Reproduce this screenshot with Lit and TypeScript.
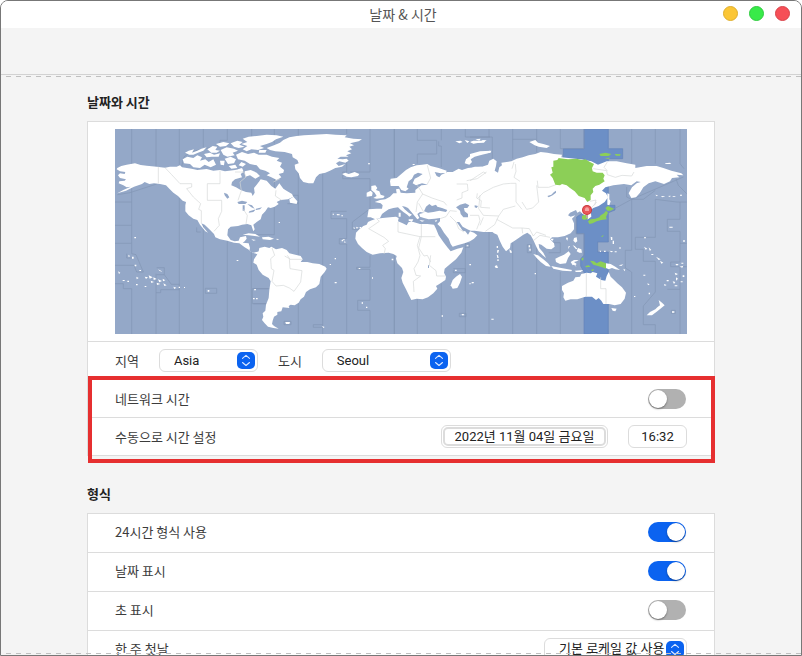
import { LitElement, html, svg, css } from "lit";
import { customElement } from "lit/decorators.js";

// The map is drawn on a 1716 x 615 grid. Each sheet is a part of it with its own origin.
const americas = [
  // North America
  "M22 138L34 132 50 128 75 124 92 129 110 131 140 134 165 137 180 134 200 134 210 130 216 136 245 140 262 144 290 141 310 146 330 144 345 148 375 144 392 140 400 150 392 156 396 166 375 172 366 180 364 190 378 196 392 204 408 210 424 212 428 222 434 212 432 198 440 188 448 178 452 172 470 176 484 192 496 200 508 184 520 200 532 208 546 216 550 224 534 232 512 234 500 240 482 246 476 250 486 242 500 240 506 246 494 254 482 258 474 256 466 268 456 278 452 292 440 300 430 308 434 322 430 328 424 310 412 306 396 308 384 312 362 314 354 322 352 340 362 354 374 358 386 356 390 346 408 342 410 350 404 358 398 362 416 364 420 378 418 386 430 392 450 388 456 394 440 396 428 392 414 382 404 376 388 364 372 362 352 356 330 352 316 346 312 336 298 322 284 308 274 304 280 316 294 332 286 328 270 308 262 294 250 290 236 280 226 268 226 250 228 240 218 236 204 222 190 212 178 200 168 190 150 186 132 184 118 186 104 180 96 186 72 194 48 206 22 214 40 204 62 194 50 196 40 190 26 184 28 178 44 176 48 172 30 168 24 160 30 154 44 156 46 150 30 148 20 142Z",
  // Arctic islands
  "M222 124L218 112 232 104 250 108 262 100 276 106 270 116 286 112 296 120 310 112 318 128 302 136 284 128 270 138 250 136 240 126Z",
  "M225 92L236 86 252 82 246 92 262 86 274 80 290 76 280 86 264 92 250 98 238 98Z",
  "M292 82L308 72 322 74 316 84 330 86 320 92 304 92ZM318 66L340 60 358 64 348 72 330 74ZM282 96L300 92 312 98 330 94 326 104 306 104 290 106Z",
  "M332 84L350 76 372 80 384 86 368 92 374 100 352 104 340 98ZM344 110L362 104 378 112 372 124 354 126ZM330 116L344 116 342 130 332 128ZM356 132L376 128 382 138 364 140Z",
  "M362 64L382 56 398 60 388 68 404 74 386 78 372 74ZM378 98L396 90 414 96 432 92 446 98 470 98 486 104 508 108 500 116 516 122 510 134 522 144 520 152 506 156 514 166 500 174 484 166 470 160 480 154 466 146 450 142 440 130 420 126 404 116 384 112Z",
  "M398 50L416 44 440 42 470 38 500 40 520 44 498 52 486 60 470 66 450 72 462 78 444 84 424 82 410 88 398 82 412 72 394 66 412 60ZM394 120L408 126 398 134 386 130ZM404 148L422 144 440 152 450 162 436 170 420 160 406 164ZM448 84L470 84 466 92 446 92ZM384 142L396 138 400 146 390 150Z",
  // Newfoundland and the Caribbean
  "M538 232L550 224 562 238 560 246 540 242ZM398 338L416 334 436 336 450 344 434 342 416 340ZM456 346L476 344 492 350 480 354 458 352ZM424 352L438 354 430 356ZM500 350L508 352 500 354Z",
  // Hawaii, Polynesia, scattered islands
  "M73 345h5v4h-5ZM55 398l5 4-4 4ZM66 404h5v6h-5ZM74 428h5v5h-5ZM24 448l7 4-4 4ZM38 474h6v3h-6ZM52 476h5v4h-5ZM79 464l7 4-6 4ZM88 444h5v3h-5ZM104 464l10 2-6 5ZM116 460l12 6-9 4ZM130 466l10 5-9 3ZM144 472l12 5-8 4ZM122 476l10 4-8 3ZM140 482l11 4-10 3ZM158 470l8 5-7 3ZM160 484l10 6-7 2ZM78 486h5v4h-5ZM104 492h5v3h-5ZM144 442l9 4 5 4-9-3ZM190 494l9 3-6 4ZM206 494h4v4h-4ZM222 495h3v3h-3ZM293 504h5v5h-5ZM380 414h5v3h-5ZM432 502l6-1v4h-6ZM429 528h5v4h-5ZM438 528h5v4h-5ZM506 300h4v3h-4Z",
];

const atlantic = [
  "M50 78L72 70 90 62 100 54 118 46 140 42 162 40 190 38 230 36 256 38 290 40 284 46 310 50 336 52 326 58 300 64 312 70 298 74 306 82 292 88 304 94 288 100 296 104 272 104 262 110 278 112 290 110 296 116 286 122 268 118 258 124 266 132 286 126 276 134 256 138 240 146 226 152 208 156 198 166 190 184 176 184 160 180 150 168 146 154 136 142 134 128 146 124 142 114 128 106 126 96 104 90 76 88 60 84Z",
  "M276 156L286 152 296 156 314 150 328 156 324 162 304 166 290 164Z",
  "M28 378L44 374 58 378 64 374 78 382 96 378 110 384 118 394 136 398 152 402 158 412 152 420 172 420 188 424 208 426 226 434 230 440 224 450 212 464 208 486 198 496 180 502 168 510 162 524 152 532 146 542 134 550 122 548 116 552 118 558 98 556 94 568 82 570 82 578 72 584 68 596 66 606 72 612 86 620 70 618 54 614 44 604 36 594 40 584 38 574 46 566 48 548 56 528 58 504 62 478 56 468 38 458 26 444 20 428 10 422 12 412 20 400 26 388Z",
  "M106 600l14 0-2 6h-10ZM216 612l8 3-4 3ZM254 408h4v4h-4ZM239 426h4v3h-4ZM254 480h6v4h-6ZM326 438h5v3h-5ZM366 466h3v4h-3ZM335 541h4v4h-4ZM348 554h4v4h-4ZM425 410h5v5h-5ZM248 275h4v3h-4ZM260 276l9 1 0 3h-8ZM274 280h5v3h-5ZM275 354h4v4h-4ZM282 358l6 2-4 3ZM278 352h6v3h-6ZM310 316l6 2-4 3ZM318 314l8 3-6 3ZM329 315h4v4h-4Z",
];

const africaEurope = [
  // Europe, the Near East and western Russia
  "M150 178L152 170 170 168 184 156 198 144 212 136 230 130 246 128 262 126 272 132 296 138 320 146 318 152 302 154 284 150 290 162 298 166 304 158 322 150 338 150 356 140 366 144 384 138 404 136 424 134 460 140 460 330 430 330 404 326 392 326 382 322 368 314 358 300 350 300 360 314 368 326 376 328 384 338 390 328 402 332 412 340 402 350 390 358 374 364 352 370 338 374 332 366 326 350 312 332 302 316 292 306 300 298 300 288 284 290 266 292 252 288 240 284 238 276 252 272 240 270 232 276 238 288 232 292 224 282 216 272 204 258 196 254 186 252 194 262 206 272 216 278 208 284 202 278 190 270 180 262 174 256 160 258 146 262 134 270 126 276 120 288 106 292 92 286 82 286 86 262 110 260 126 260 128 250 122 244 104 240 120 234 136 232 150 224 160 214 170 214 168 202 178 200 182 212 200 214 226 212 226 204 244 190 264 188 246 184 228 190 218 184 224 170 236 164 248 156 234 152 222 158 216 170 206 178 200 196 206 200 196 208 184 204 176 192 164 192 152 192Z",
  // Africa
  "M84 300L92 296 108 290 128 288 150 286 168 284 176 288 174 298 188 304 200 310 206 300 220 300 240 306 262 306 282 308 288 320 296 340 310 360 322 376 332 388 352 380 370 376 364 392 348 412 328 428 314 440 312 452 318 464 316 474 298 486 288 492 292 500 280 514 264 526 248 532 230 530 214 534 206 518 198 502 188 482 184 468 190 450 186 438 172 424 168 410 170 402 160 396 146 392 120 394 98 398 80 390 66 378 54 366 46 350 48 332 58 322 70 312 80 308Z",
  "M360 456L366 464 360 482 352 498 338 500 332 490 338 474 348 464Z",
  // British Isles
  "M94 192L106 190 112 198 108 204 118 208 122 218 134 222 130 228 110 230 100 228 110 222 104 212 94 204ZM80 212L92 206 98 212 96 222 80 224Z",
  // Novaya Zemlya and Svalbard
  "M374 124L378 112 388 104 400 98 416 92 450 86 450 92 420 100 404 104 392 112 396 120 388 128Z",
  "M346 58l16-2 6 4-10 4ZM374 54l14 4-6 5ZM392 60l20-2 4 4-16 3ZM406 52l16-2-4 6ZM424 54l16 1-8 5ZM218 126h6v3h-6ZM84 124h6v3h-6Z",
  "M206 292l14 0-4 8-10-4ZM176 272l6 0 0 12-6 0ZM238 294l16 2-8 3ZM284 296l8-2-4 6ZM380 370h5v3h-5ZM388 426h5v4h-5ZM345 443h5v4h-5ZM388 484h4v3h-4ZM396 480h5v4h-5ZM305 580h4v4h-4ZM364 576l9 1-4 4Z",
];

const asia = [
  "M0 140L14 134 36 134 54 128 58 116 70 110 80 118 78 132 74 146 84 152 88 136 96 130 94 122 110 120 124 118 140 110 158 106 176 100 196 96 212 90 232 92 252 96 276 98 274 106 330 112 364 118 384 128 410 118 440 118 470 124 496 128 496 138 530 132 560 132 580 138 604 146 634 154 640 160 620 158 628 166 606 168 600 178 582 186 556 178 536 184 520 196 510 212 498 226 484 228 476 214 486 196 500 184 512 180 500 178 484 190 462 186 430 190 406 196 396 206 408 214 414 226 404 240 386 252 370 258 362 264 364 284 354 292 346 290 346 280 338 276 330 268 322 272 318 264 300 272 294 280 302 284 316 280 306 290 312 304 312 322 302 334 284 342 264 346 246 346 240 352 252 364 254 374 244 382 230 380 214 368 206 366 208 378 220 392 228 408 218 400 206 388 198 372 190 354 182 340 172 332 160 338 146 348 134 356 122 364 120 378 108 388 98 374 90 358 82 338 72 334 60 324 40 328 20 322 0 320Z",
  // Severnaya Zemlya and New Siberian fringe
  "M178 60L196 54 204 62 220 66 240 72 230 78 206 74 194 70ZM0 60l10-4 36 0-4 6-34 2ZM0 96L30 88 64 86 62 92 30 96 0 106Z",
  // South-east Asia
  "M190 396L204 400 220 412 234 424 242 434 228 432 212 420 200 408ZM256 410L268 404 282 398 296 388 302 396 294 408 288 424 270 426 258 420ZM244 432L262 436 286 440 306 444 304 448 278 446 250 440ZM302 420l10-6 14 0-6 4-8 2 8 6-4 4 4 6-8-8-4 2ZM312 348l8-2 2 12-6 4-6-6ZM308 370l6 2 8 8-4 2ZM324 378l10 4 2 10-8 0-8-4ZM300 372l-6 10 2-10ZM314 446l26-2-8 6-14 0ZM118 382l6 4 2 6-6 0ZM290 346l4 2-2 8-4-6ZM243 350l8 0-3 6-5-2Z",
  "M80 372l4 0 0 6-4 0ZM82 384l5 0-2 8-4 0ZM80 398l4 2 2 8-4 0ZM82 412h4v5h-4ZM74 432l7-2 3 8-7 0ZM176 370h4v6h-4ZM178 380h4v6h-4ZM194 453h4v4h-4ZM64 590h7v3h-7ZM0 484l10-4v3Z",
];

const pacific = [
  // Australia, Tasmania, New Guinea, New Zealand
  "M6 492L24 482 40 476 46 466 60 464 64 456 80 452 92 454 98 450 112 454 108 464 124 474 136 476 140 462 146 450 152 464 160 472 172 484 186 496 198 512 194 530 182 546 164 550 148 546 130 546 124 536 116 528 108 534 96 524 76 524 52 532 32 532 16 536 10 526 12 514 6 504ZM154 558L170 560 166 568 158 566Z",
  "M138 424L152 426 166 434 180 444 166 442 156 438 146 442 138 438ZM296 534L306 542 314 550 304 558 292 568 276 580 260 580 270 570 286 562 292 556 300 550Z",
  // Sakhalin and Kuril islands
  "M142 214L148 216 148 232 152 238 148 250 142 248ZM314 124l16-2 4 4-16 0ZM286 218l8 2-4 3ZM302 222l14 1-8 3ZM324 222l8-1-2 4ZM338 222h8v2h-8ZM360 218h6v3h-6Z",
  // Micronesia and Melanesia
  "M152 344l5 2 0 8-4 0ZM158 356h4v10h-4ZM118 386l5 0 0 5-4-3ZM132 386h5v4h-5ZM148 386l12 2-6 3ZM164 388h6v3h-6ZM178 376h4v4h-4ZM176 430l14-3-6 5ZM190 440l6 3-3 5ZM252 374l10 6-5 3ZM266 376l8 8-5 2ZM252 346h6v3h-6ZM274 396h6v3h-6ZM288 404l14 8-6 2ZM300 416l10 6-6 3ZM328 314h10v3h-10ZM346 426l10 0-5 5ZM358 434l12-3-3 6ZM364 422h6v3h-6ZM344 452l10 4-7 4ZM348 466l6 4-6 6ZM338 478l8 2-4 6ZM320 474h6v4h-6ZM312 486l8 3-6 3ZM344 490h8v3h-8ZM362 478h6v3h-6ZM368 460h5v5h-5ZM262 484l7 3-5 3ZM250 458h6v3h-6ZM266 512h4v5h-4ZM336 568h7v4h-7ZM222 522h4v3h-4ZM370 354h4v6h-4Z",
];

const seas = [
  // Great Lakes, Great Slave Lake and Winnipeg (sheet of the Americas)
  { x: -15, d: "M342 212l10 4 6 10-6 4-8-10ZM382 240l14-4 16 4-6 6-20 0ZM398 250l6 0 0 16-6 0ZM412 246l14 4 8 10-10-4ZM418 268l20-6-8 8-14 2ZM438 260l18-4-6 6-12 2Z" },
  // Black Sea, Caspian
  { x: 675, d: "M252 268L258 254 268 246 276 252 288 248 292 254 306 258 322 264 318 270 298 266 280 270 264 272ZM348 256L360 248 376 244 388 250 382 258 372 258 374 268 384 276 384 286 370 286 362 276 360 266ZM264 430h3v8h-3Z" },
  // Lake Baikal and Aral
  { x: 1065, d: "M232 222L244 218 252 210 258 206 258 212 248 220 236 226ZM14 250l10 2-4 6-6-2Z" },
];

const japanZone = [
  "M0 109L24 112 50 110 66 114 76 112 90 120 102 126 96 138 98 148 110 152 128 152 134 160 130 170 134 178 118 188 106 192 98 200 100 210 92 220 92 234 82 240 74 228 56 222 44 208 30 198 20 190 6 186 0 190 -14 188 -22 168 -30 158 -22 152 -26 136 -20 134 -20 116 -8 114 -4 108Z",
  "M84 298L92 292 106 290 118 286 122 280 132 274 138 266 144 272 138 284 140 292 124 294 110 298 98 304 88 306ZM136 258L144 252 152 256 162 260 152 266 142 266ZM66 282L80 276 84 290 72 294 66 290ZM90 416L102 418 110 424 122 418 138 424 138 440 126 436 114 432 100 428ZM118 96l18-4 18 4-8 6-24 0ZM134 108l16-1-4 4ZM164 96l18 1-2 4-12 0ZM64 410l6-4 0 8-4 2ZM76 432l10-2 6 4-14 2ZM92 444l10-3-3 7ZM124 342l8-2-6 6Z",
];

const zoneLines = [
  { x: -15, d: "M65 21V240M65 310V364M65 500V636M138 21V185M138 455V636M208 21V130M208 225V636M280 21V75M280 310V636M352 21V55M352 356V636M424 390V636M15 240H65V310H15M15 364H65V395L78 398 100 450H80L72 430H15M50 395V408H65M15 485H40V500H65M140 437H163V458H140M163 458L184 487H208V503H152V512H138M286 499H320V514H286ZM260 316V330H272M427 500H485M427 500V545H485M215 133L222 105 240 90 330 70V55H352M22 218L60 212 140 186" },
  { x: 405, d: "M5 21V60M73 21V64M73 165V338M0 338H73M145 21V42M145 110V636M218 150V636M290 21V36M290 115V150H278V170H360M290 268H243V290H290V350H268V366H290V636M360 21V150H300M360 170V260L307 300V322H330M360 400V436H320V442H360V535H323V565H360V636M433 21V170M433 420V636M102 598H123V608H102ZM218 608H190V616H218M10 500H55M10 545H48M118 220H145V245H112" },
  { x: 675, d: "M163 21V165M163 400V636M232 21V55H290V96H232V125M232 528V636M304 21V55M296 58V72H304V135M304 484V636M376 21V45H450M376 345V636M340 445V452H376V440H340M358 574H378V584H358ZM375 365H388V376H375" },
  { x: 1065, d: "M67 45H0M67 45V110M57 21V45M57 330V636M128 21V110M128 362V636M128 52H200V21M200 52V92M172 368V392H184V368ZM200 378V636M271 21V80H342M215 362H271V392H236M271 450V636M342 21V80M318 290V335H342V430L360 450" },
  { x: 1335, d: "M215 21V125M215 232V385H196V438L215 450V636M286 21V125M286 232V346H226V382H250V418H286V510L250 552V608H286V636M360 21V125L372 140M360 240V292H322V328H360V420H332V434H360V502H322M360 364H380M360 434H380M360 502V636M145 270L215 232 370 165M200 195V225L215 232H250L286 205M286 232L350 240H380M348 170L355 190 380 215M334 565H346V574H334Z" },
];

const borderLines = [
  { x: -15, d: "M145 134V184M165 137L185 158 210 185H245V195L230 200 250 225 272 245 266 262 274 266V304M330 146V185H292V235H335V268L325 290 328 310 312 328M375 150H402L408 165 390 180 394 206 384 235M400 262L412 280 408 306M498 205L496 222 514 234M490 180L510 170" },
  { x: 405, d: "M66 378L74 400 62 410 64 440 72 445 66 478 78 492 100 490 118 498 132 508 152 480 156 446 120 440 118 410 104 402M112 400L120 412H156" },
  { x: 675, d: "M110 290L118 298 86 320 132 346 146 358 128 370 136 380 132 396M174 300V330L240 344H286M244 306V344L236 378 252 402 262 400 272 420M240 344L232 370 240 400 234 420 222 440 228 460 242 462 220 478 222 510M272 400L268 430 288 446 290 462H316M262 130L272 168 262 186M232 190L248 216 232 240 228 270M248 216L276 228 312 240 320 250M252 272L236 244M350 186H382L384 205 366 212 366 228 350 234M412 214L410 228 424 236 422 256 450 258M300 290L318 284 330 266 350 268M330 282L348 300 356 320 372 330M380 176L412 170 440 150" },
  { x: 1065, d: "M0 176L40 150 48 154M22 230L40 212 70 196 100 186 122 184 138 184V240L156 262M30 220L26 260 40 280 86 282 100 262 136 252M0 280L26 280 30 296 20 322M40 286L30 310M136 126L138 148 132 166 150 178M132 120L126 140M200 190L206 240 188 258 170 262 156 240M258 188L236 196 204 196 202 176M86 282L74 308 46 328M80 292L128 318 156 318 158 334M156 318L178 320 190 342 200 330 228 340M360 262L380 240M190 356L210 340 240 346" },
  { x: 1335, d: "M79 453V524M122 466V500H138V546M100 140L140 146 142 158 166 166 186 160 215 162 222 150M142 120L132 136 142 146M90 238L108 234 104 250" },
];

const sheet = (x: number, shapes: string[]) =>
  svg`<g transform="translate(${x} -21)">${shapes.map((d) => svg`<path d=${d}></path>`)}</g>`;
const parts = (list: { x: number; d: string }[]) => list.map((p) => sheet(p.x, [p.d]));

@customElement("zone-map")
export class ZoneMap extends LitElement {
  static styles = css`
    :host { display: block; }
    .map { display: block; width: 100%; height: auto; }
    .ocean { fill: #94a8c8; }
    .band { fill: #6c8fc6; stroke: #6384b8; stroke-width: 2; }
    .land { fill: #fff; }
    .green { fill: #8ccf57; }
    .zones { fill: none; stroke: #8295b4; stroke-width: 2; }
    .borders { fill: none; stroke: #d5d8d8; stroke-width: 2; }
  `;

  render() {
    return html`
      <svg class="map" viewBox="0 0 1716 615" role="img" aria-label="시간대 지도">
        <rect class="ocean" width="1716" height="615"></rect>
        <path class="band" transform="translate(1335 -21)" d="M72 21H145V80H188V110H145V250H165V264L145 272V360H113V390H145V636H72V450L62 432V410L72 400V335H50V285L72 270V110H10V80H72Z"></path>
        <g class="zones">${parts(zoneLines)}</g>
        <g class="land">
          ${sheet(-15, americas)}${sheet(405, atlantic)}${sheet(675, africaEurope)}
          ${sheet(1065, asia)}${sheet(1335, pacific)}
        </g>
        <g class="ocean">${parts(seas)}</g>
        <g class="borders">${parts(borderLines)}</g>
        <g class="green">${sheet(1335, japanZone)}</g>
        <g transform="translate(1335 -21)">
          <path d="M78 270h6v18h-6z" fill="#b9a9a9"></path>
          <circle cx="81" cy="264" r="15" fill="#c9383c"></circle>
          <circle cx="81" cy="264" r="12" fill="#e8575a"></circle>
          <path d="M75 262a6 6 0 0 1 12 0v5h-12z" fill="#f5a3a3"></path>
        </g>
      </svg>
    `;
  }
}

@customElement("app-root")
export class AppRoot extends LitElement {
  static styles = css`
    :host {
      display: block;
      font: 13px/20px "Noto Sans CJK KR", sans-serif;
      color: #3c3c3c;
    }
    * { box-sizing: border-box; }
    .window {
      position: relative;
      display: flex;
      flex-direction: column;
      height: 100vh;
      overflow: hidden;
      border: 1px solid #777;
      border-radius: 8px 8px 0 0;
      background: #f4f4f4;
    }
    .titlebar {
      display: grid;
      grid-template-columns: 1fr auto 1fr;
      align-items: center;
      flex: none;
      height: 27px;
      padding: 0 11px 2px 15px;
      background: #fff;
    }
    .title {
      grid-column: 2;
      margin: 0;
      font-size: 14px;
      font-weight: 400;
      color: #555;
    }
    .controls { display: flex; justify-content: flex-end; gap: 11px; }
    .dot {
      width: 15px;
      height: 15px;
      padding: 0;
      border: 1px solid;
      border-radius: 50%;
    }
    .minimize { background: #fbc636; border-color: #dfae2c; }
    .maximize { background: #38ea49; border-color: #2fcb3f; }
    .close { background: #f64f57; border-color: #d8434a; }
    .toolbar { flex: none; height: 47px; border-bottom: 1px solid #d2d2d2; }
    .edge {
      flex: none;
      height: 1px;
      background: repeating-linear-gradient(90deg, transparent 0 5px, #c0c0c0 5px 10px);
    }
    .top { margin-top: 1px; }
    .bottom { position: absolute; inset: auto 0 1px; }
    .content {
      flex: 1;
      min-height: 0;
      overflow: hidden;
      padding: 15px 86px 0;
    }
    .heading {
      margin: 0 0 9px;
      font-size: 13px;
      line-height: 20px;
      font-weight: 700;
      color: #222;
    }
    .card {
      margin-bottom: 28px;
      border: 1px solid #dcdcdc;
      background: #fff;
    }
    .mapbox { padding: 7px 27px; }
    .row {
      display: flex;
      align-items: center;
      gap: 20px;
      min-height: 38px;
      padding: 0 27px;
    }
    .row, .marked { border-top: 1px solid #dcdcdc; }
    .format .row { min-height: 39px; padding-bottom: 2px; }
    .marked .row:first-child { border-top: 0; min-height: 37px; }
    .format .row:first-child { border-top: 0; min-height: 38px; }
    .grow { flex: 1; }
    .marked { position: relative; }
    .marked::after {
      content: "";
      position: absolute;
      inset: -4px -1px -8px 0;
      border: 4px solid #e62f30;
      pointer-events: none;
    }
    .select { position: relative; display: flex; }
    .field {
      appearance: none;
      height: 23px;
      margin: 0;
      border: 1px solid #dcdcdc;
      border-radius: 6px;
      background: #fff;
      font: 13px/20px Roboto, "Noto Sans CJK KR", sans-serif;
      color: #222;
    }
    .pick { width: 100%; padding: 0 20px 0 14px; }
    .region { width: 99px; }
    .city { width: 129px; }
    .weekday { width: 143px; }
    .arrows {
      position: absolute;
      top: 3px;
      right: 3px;
      width: 18px;
      height: 17px;
      border-radius: 5px;
      background: #0b63f0;
      pointer-events: none;
    }
    .date { display: flex; width: 167px; padding: 1px; }
    .ring {
      flex: 1;
      height: 19px;
      border: 2px solid #dcdcdc;
      border-radius: 5px;
      line-height: 15px;
    }
    .time { width: 59px; padding: 0; }
    .switch {
      appearance: none;
      display: flex;
      width: 38px;
      height: 20px;
      margin: 0 1px 0 0;
      padding: 1px;
      border-radius: 10px;
      background: #b1b1b1;
    }
    .switch::before {
      content: "";
      width: 18px;
      height: 18px;
      border-radius: 50%;
      background: #fff;
      box-shadow: 0 1px 2px rgb(0 0 0 / 40%);
    }
    .switch:checked { justify-content: flex-end; background: #0b63f0; }
  `;

  private select(id: string, value: string) {
    return html`
      <span class="select ${id}">
        <select class="field pick" id=${id}><option>${value}</option></select>
        <svg class="arrows" viewBox="0 0 18 17" aria-hidden="true">
          <path d="M5.5 6.3L9 3.3l3.5 3M5.5 10.5l3.5 3 3.5-3" fill="none" stroke="#dce8ff" stroke-width="1.1" stroke-linecap="round" stroke-linejoin="round"></path>
        </svg>
      </span>
    `;
  }

  private toggle(id: string, label: string, on: boolean) {
    return html`
      <div class="row">
        <label class="grow" for=${id}>${label}</label>
        <input class="switch" type="checkbox" role="switch" id=${id} .checked=${on} />
      </div>
    `;
  }

  render() {
    return html`
      <div class="window">
        <header class="titlebar">
          <h1 class="title">날짜 &amp; 시간</h1>
          <div class="controls">
            <button class="dot minimize" aria-label="최소화"></button>
            <button class="dot maximize" aria-label="최대화"></button>
            <button class="dot close" aria-label="닫기"></button>
          </div>
        </header>
        <div class="toolbar"></div>
        <div class="edge top"></div>
        <main class="content">
          <h2 class="heading">날짜와 시간</h2>
          <section class="card">
            <div class="mapbox"><zone-map></zone-map></div>
            <div class="row">
              <label for="region">지역</label>
              ${this.select("region", "Asia")}
              <label for="city">도시</label>
              ${this.select("city", "Seoul")}
            </div>
            <div class="marked">
              ${this.toggle("network", "네트워크 시간", false)}
              <div class="row">
                <span class="grow">수동으로 시간 설정</span>
                <button class="field date"><span class="ring">2022년 11월 04일 금요일</span></button>
                <button class="field time">16:32</button>
              </div>
            </div>
          </section>
          <h2 class="heading">형식</h2>
          <section class="card format">
            ${this.toggle("hours", "24시간 형식 사용", true)}
            ${this.toggle("date", "날짜 표시", true)}
            ${this.toggle("seconds", "초 표시", false)}
            <div class="row">
              <label class="grow" for="weekday">한 주 첫날</label>
              ${this.select("weekday", "기본 로케일 값 사용")}
            </div>
          </section>
        </main>
        <div class="edge bottom"></div>
      </div>
    `;
  }
}
